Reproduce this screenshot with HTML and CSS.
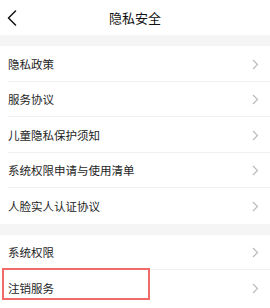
FILE: index.html
```html
<!DOCTYPE html>
<html lang="zh">
<head>
<meta charset="utf-8">
<link rel="stylesheet" href="styles.css">
</head>
<body>
<div class="page">
  <header class="header">
    <span class="back">
      <svg width="10" height="16" viewBox="0 0 10 16"><path d="M8.5 1 L1.5 8 L8.5 15" fill="none" stroke="#111" stroke-width="1.5" stroke-linecap="round" stroke-linejoin="round"/></svg>
    </span>
    <h1 class="title">隐私安全</h1>
    <span></span>
  </header>
  <div class="gap"></div>
  <ul class="list">
    <li class="row"><span class="label">隐私政策</span><span class="chev"><svg width="7" height="11" viewBox="0 0 7 11"><path d="M1 1 L5.5 5.5 L1 10" fill="none" stroke="#b8b8b8" stroke-width="1.1"/></svg></span></li>
    <li class="row"><span class="label">服务协议</span><span class="chev"><svg width="7" height="11" viewBox="0 0 7 11"><path d="M1 1 L5.5 5.5 L1 10" fill="none" stroke="#b8b8b8" stroke-width="1.1"/></svg></span></li>
    <li class="row"><span class="label">儿童隐私保护须知</span><span class="chev"><svg width="7" height="11" viewBox="0 0 7 11"><path d="M1 1 L5.5 5.5 L1 10" fill="none" stroke="#b8b8b8" stroke-width="1.1"/></svg></span></li>
    <li class="row"><span class="label">系统权限申请与使用清单</span><span class="chev"><svg width="7" height="11" viewBox="0 0 7 11"><path d="M1 1 L5.5 5.5 L1 10" fill="none" stroke="#b8b8b8" stroke-width="1.1"/></svg></span></li>
    <li class="row last"><span class="label">人脸实人认证协议</span><span class="chev"><svg width="7" height="11" viewBox="0 0 7 11"><path d="M1 1 L5.5 5.5 L1 10" fill="none" stroke="#b8b8b8" stroke-width="1.1"/></svg></span></li>
  </ul>
  <div class="gap"></div>
  <ul class="list">
    <li class="row"><span class="label">系统权限</span><span class="chev"><svg width="7" height="11" viewBox="0 0 7 11"><path d="M1 1 L5.5 5.5 L1 10" fill="none" stroke="#b8b8b8" stroke-width="1.1"/></svg></span></li>
    <li class="row last highlighted"><span class="label">注销服务</span><span class="chev"><svg width="7" height="11" viewBox="0 0 7 11"><path d="M1 1 L5.5 5.5 L1 10" fill="none" stroke="#b8b8b8" stroke-width="1.1"/></svg></span><span class="mark"></span></li>
  </ul>
</div>
</body>
</html>
```
FILE: styles.css
```css
html, body {
  margin: 0;
  padding: 0;
  background: #fff;
}
.page {
  width: 270px;
  height: 308px;
  overflow: hidden;
  font-family: "Noto Sans CJK SC", "Noto Sans", sans-serif;
  color: #222;
}
.header {
  height: 35px;
  display: grid;
  grid-template-columns: 1fr auto 1fr;
  align-items: center;
}
.back {
  padding-left: 7px;
  display: flex;
  align-items: center;
  padding-top: 1px;
}
.title {
  margin: 0;
  font-size: 13px;
  font-weight: 400;
  color: #111;
  line-height: 1;
}
.gap {
  height: 11px;
  background: #f5f5f5;
}
.list {
  list-style: none;
  margin: 0;
  padding: 0 0 0 8px;
}
.row {
  position: relative;
  height: 35.5px;
  display: flex;
  align-items: center;
  justify-content: space-between;
  padding-right: 11px;
  padding-top: 2px;
  border-bottom: 1px solid #f0f0f0;
  box-sizing: border-box;
}
.row.last {
  border-bottom: none;
}
.label {
  font-size: 11.5px;
  line-height: 1;
  color: #1e1e1e;
}
.chev {
  display: flex;
  align-items: center;
}
.mark {
  position: absolute;
  left: -6px;
  top: -2px;
  width: 148px;
  height: 32px;
  border: 2px solid #f36a6a;
  box-sizing: border-box;
}
```
